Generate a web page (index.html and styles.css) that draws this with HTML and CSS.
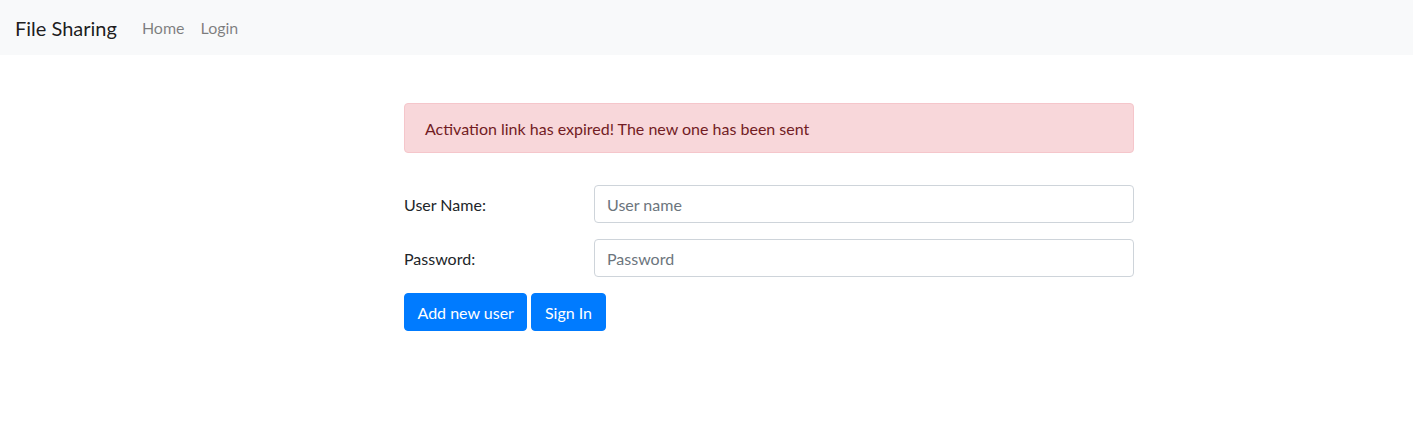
FILE: index.html
```html
<!DOCTYPE html>
<html lang="en">
<head>
<meta charset="utf-8">
<title>File Sharing</title>
<link rel="stylesheet" href="styles.css">
</head>
<body>
<nav class="navbar">
  <a class="brand" href="#">File Sharing</a>
  <ul class="nav">
    <li><a class="nav-link" href="#">Home</a></li>
    <li><a class="nav-link" href="#">Login</a></li>
  </ul>
</nav>
<main class="main">
  <div class="alert">Activation link has expired! The new one has been sent</div>
  <form class="form">
    <div class="form-row">
      <label class="form-label" for="username">User Name:</label>
      <div class="form-field"><input class="input" id="username" type="text" placeholder="User name"></div>
    </div>
    <div class="form-row">
      <label class="form-label" for="password">Password:</label>
      <div class="form-field"><input class="input" id="password" type="password" placeholder="Password"></div>
    </div>
    <div class="actions">
      <button class="btn" type="button">Add new user</button>
      <button class="btn" type="submit">Sign In</button>
    </div>
  </form>
</main>
</body>
</html>
```
FILE: styles.css
```css
* { box-sizing: border-box; }
html, body { margin: 0; padding: 0; }
body {
  font-family: "Lato", "Noto Sans", Arial, sans-serif;
  font-size: 16px;
  line-height: 1.5;
  color: #212529;
  background: #fff;
}
.navbar {
  display: flex;
  align-items: center;
  background: #f8f9fa;
  height: 55px;
  padding: 0 16px 0 15px;
}
.brand {
  font-size: 20px;
  color: rgba(0,0,0,.9);
  text-decoration: none;
  margin-right: 17px;
  line-height: 30px;
}
.nav {
  display: flex;
  list-style: none;
  margin: 0;
  padding: 0;
}
.nav-link {
  display: block;
  padding: 8px;
  color: rgba(0,0,0,.5);
  text-decoration: none;
}
.main {
  width: 730px;
  margin: 48px 0 0 404px;
}
.alert {
  background: #f8d7da;
  border: 1px solid #f5c6cb;
  color: #721c24;
  border-radius: 4px;
  padding: 13px 20px 11px;
  margin-bottom: 32px;
  height: 50px;
}
.form-row {
  display: flex;
  align-items: center;
  margin-bottom: 16px;
}
.form-label {
  width: 190px;
  padding: 8px 0 6px;
}
.form-field { flex: 1; }
.input {
  display: block;
  width: 100%;
  height: 38px;
  padding: 6px 12px;
  font: inherit;
  color: #495057;
  background: #fff;
  border: 1px solid #ced4da;
  border-radius: 4px;
}
.input::placeholder { color: #6c757d; opacity: 1; }
.actions {
  display: flex;
  gap: 4px;
}
.btn {
  height: 38px;
  padding: 7px 12.5px 5px;
  font: inherit;
  color: #fff;
  background: #007bff;
  border: 1px solid #007bff;
  border-radius: 4px;
  cursor: pointer;
}
```
